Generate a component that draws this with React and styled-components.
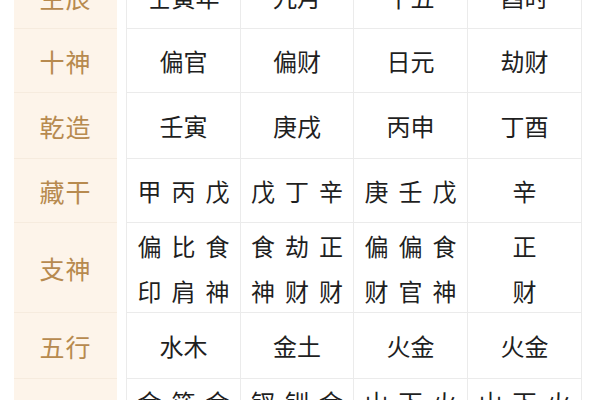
import styled, { createGlobalStyle } from 'styled-components';

const rows = [
  { label: '生辰', height: 64, cells: ['壬寅年', '九月', '十五', '酉时'] },
  { label: '十神', height: 64, cells: ['偏官', '偏财', '日元', '劫财'] },
  { label: '乾造', height: 66, cells: ['壬寅', '庚戌', '丙申', '丁酉'] },
  { label: '藏干', height: 64, spaced: true, cells: ['甲丙戊', '戊丁辛', '庚壬戊', '辛'] },
  {
    label: '支神',
    height: 90,
    spaced: true,
    cells: [
      ['偏比食', '印肩神'],
      ['食劫正', '神财财'],
      ['偏偏食', '财官神'],
      ['正', '财'],
    ],
  },
  { label: '五行', height: 66, cells: ['水木', '金土', '火金', '火金'] },
  {
    label: '纳音',
    height: 90,
    spaced: true,
    cells: [
      ['金箔金', '长生'],
      ['钗钏金', '养'],
      ['山下火', '病'],
      ['山下火', '死'],
    ],
  },
];

const widths = [114, 113, 114, 114];

const App = () => {
  return (
    <>
      <GlobalStyle />
      <Page>
        <Sheet>
          {rows.map((row) => (
            <Row key={row.label} $height={row.height}>
              <Label>{row.label}</Label>
              {row.cells.map((cell, i) => (
                <Cell key={i} $width={widths[i]} $first={i === 0}>
                  {(Array.isArray(cell) ? cell : [cell]).map((line, j) => (
                    <Line key={j} $spaced={row.spaced} $multi={Array.isArray(cell)}>
                      {line}
                    </Line>
                  ))}
                </Cell>
              ))}
            </Row>
          ))}
        </Sheet>
      </Page>
    </>
  );
};

const GlobalStyle = createGlobalStyle`
  body {
    margin: 0;
    background: #ffffff;
    font-family: "Noto Sans CJK SC", "Noto Sans", sans-serif;
  }
`;

const Page = styled.div`
  width: 600px;
  height: 400px;
  overflow: hidden;
  background: #ffffff;
`;

const Sheet = styled.div`
  display: flex;
  flex-direction: column;
  margin-top: -35px;
  padding-left: 14px;
`;

const Row = styled.div`
  display: flex;
  height: ${(p) => p.$height}px;
`;

const Label = styled.div`
  box-sizing: border-box;
  width: 103px;
  margin-right: 9px;
  display: flex;
  align-items: center;
  justify-content: center;
  background: #fdf4ea;
  border-bottom: 1px solid #f6ebde;
  color: #b78a4f;
  font-size: 25px;
  letter-spacing: 1px;
`;

const Cell = styled.div`
  box-sizing: border-box;
  width: ${(p) => p.$width + (p.$first ? 1 : 0)}px;
  display: flex;
  flex-direction: column;
  align-items: center;
  justify-content: center;
  border-right: 1px solid #ebebeb;
  border-bottom: 1px solid #ebebeb;
  border-left: ${(p) => (p.$first ? '1px solid #ebebeb' : 'none')};
  color: #1f1f1f;
  font-size: 24px;
`;

const Line = styled.div`
  line-height: ${(p) => (p.$multi ? '45px' : '30px')};
  letter-spacing: ${(p) => (p.$spaced ? '10px' : '0')};
  margin-right: ${(p) => (p.$spaced ? '-10px' : '0')};
`;

export default App;
